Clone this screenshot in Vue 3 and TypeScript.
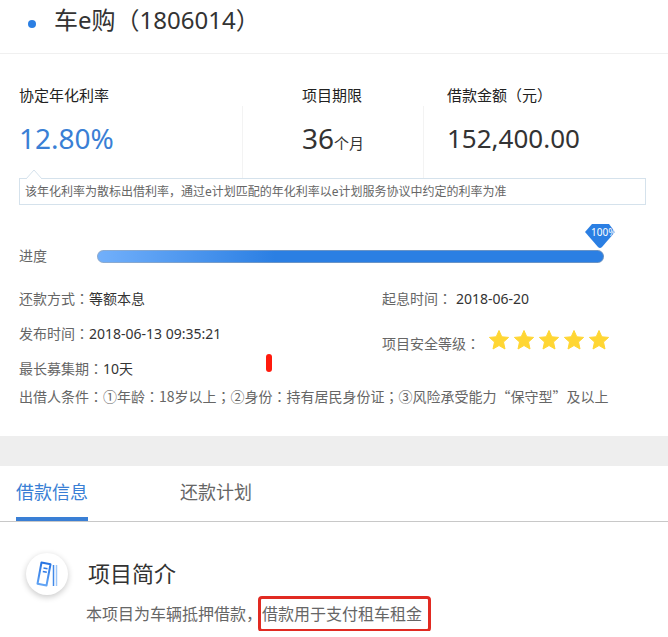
<script setup lang="ts">
import { ref } from 'vue'

interface Tab {
  id: string
  label: string
}

const progress = 100
const stars = 5
const tabs: Tab[] = [
  { id: 'info', label: '借款信息' },
  { id: 'plan', label: '还款计划' },
]
const active = ref('info')
</script>

<template>
  <main class="page">
    <header class="title-bar">
      <span class="dot"></span>
      <h1>车e购<span class="punct" lang="zh-TW">（</span>1806014<span class="punct" lang="zh-TW">）</span></h1>
    </header>

    <section class="summary">
      <dl class="stats">
        <div class="stat">
          <dt>协定年化利率</dt>
          <dd class="rate">12.80%</dd>
        </div>
        <div class="stat stat-term">
          <dt>项目期限</dt>
          <dd class="term">36<small>个月</small></dd>
        </div>
        <div class="stat stat-amount">
          <dt>借款金额<span class="punct" lang="zh-TW">（</span>元<span class="punct" lang="zh-TW">）</span></dt>
          <dd>152,400.00</dd>
        </div>
      </dl>

      <p class="note">
        <svg class="caret" width="18" height="10" viewBox="0 0 18 10" aria-hidden="true">
          <path d="M1 10 9 1l8 9" fill="#fff" stroke="#d5e2ec" />
        </svg>
        该年化利率为散标出借利率，通过e计划匹配的年化利率以e计划服务协议中约定的利率为准
      </p>

      <div class="progress-row">
        <span class="progress-label">进度</span>
        <div class="track" role="progressbar" aria-label="进度" :aria-valuenow="progress">
          <div class="fill" :style="{ width: progress + '%' }"></div>
          <div class="badge">
            <svg width="30" height="25" viewBox="0 0 30 25" aria-hidden="true">
              <path d="M7 0h17l6 8-13 15q-2 2-4 0L0 8z" fill="#2b7fe3" />
            </svg>
            <span class="badge-text">{{ progress }}%</span>
          </div>
        </div>
      </div>

      <div class="details">
        <div class="col-left">
          <p>还款方式<span class="punct" lang="zh-TW">：</span><b>等额本息</b></p>
          <p>发布时间<span class="punct" lang="zh-TW">：</span><b>2018-06-13 09:35:21</b></p>
          <p>最长募集期<span class="punct" lang="zh-TW">：</span><b>10天</b></p>
        </div>
        <div class="col-right">
          <p>起息时间<span class="punct" lang="zh-TW">：</span><b class="date">2018-06-20</b></p>
          <p class="level">
            <span>项目安全等级<span class="punct" lang="zh-TW">：</span></span>
            <span class="stars">
              <svg v-for="n in stars" :key="n" width="22" height="22" viewBox="0 0 22 22" aria-hidden="true">
                <path
                  d="M11 1.5 13.8 7.8 20.6 8.4 15.5 13 17 20 11 16.5 5 20 6.5 13 1.4 8.4 8.2 7.8z"
                  fill="#ffd633" stroke="#ffd633" stroke-linejoin="round"
                />
              </svg>
            </span>
          </p>
        </div>
        <span class="mark"></span>
      </div>
      <p class="conditions">出借人条件<span class="punct" lang="zh-TW">：</span>①年龄<span class="punct" lang="zh-TW">：</span>18岁以上<span class="punct" lang="zh-TW">；</span>②身份<span class="punct" lang="zh-TW">：</span>持有居民身份证<span class="punct" lang="zh-TW">；</span>③风险承受能力“保守型”及以上</p>
    </section>

    <nav class="tabs">
      <button
        v-for="tab in tabs"
        :key="tab.id"
        type="button"
        :class="{ active: active === tab.id }"
        @click="active = tab.id"
      >{{ tab.label }}</button>
    </nav>

    <section class="intro">
      <span class="intro-icon">
        <svg width="42" height="42" viewBox="0 0 42 42" fill="none" aria-hidden="true">
          <defs>
            <linearGradient id="book" x1="0" y1="0" x2="0" y2="1">
              <stop offset="0" stop-color="#2673e2" />
              <stop offset="1" stop-color="#63a5f5" />
            </linearGradient>
          </defs>
          <path d="M15.5 9.5 24.5 11.2 20.5 32.5 11.5 30.8z" stroke="url(#book)" stroke-width="2" stroke-linejoin="round" />
          <path d="m17.5 15 4 .8M16.8 18.5l4 .8" stroke="#2f7be6" stroke-width="1.5" />
          <path d="M27.5 12v21" stroke="#4189e8" stroke-width="1.5" />
          <path d="M30.5 12v21" stroke="#9cc6f8" stroke-width="1.5" />
        </svg>
      </span>
      <div class="intro-body">
        <h2>项目简介</h2>
        <p>本项目为车辆抵押借款，<mark>借款用于支付租车租金</mark></p>
      </div>
    </section>
  </main>
</template>

<style>
body {
  margin: 0;
  background: #fff;
}
</style>

<style scoped>
.page {
  font-family: "Noto Sans", "Noto Sans CJK SC", sans-serif;
  font-size: 14px;
  color: #666;
  overflow: hidden;
}
h1, h2, p, dl, dd {
  margin: 0;
  font-weight: 400;
}
b {
  font-weight: 400;
  color: #333;
}
/* Punctuation centred in its em box */
.punct {
  font-family: "Noto Sans CJK TC", sans-serif;
  line-height: 1;
}
.title-bar {
  display: flex;
  align-items: center;
  gap: 18px;
  padding: 0 28px 13px;
  border-bottom: 1px solid #f0f0f0;
}
.dot {
  width: 8px;
  height: 8px;
  margin-top: 8px;
  border-radius: 50%;
  background: #2b7fe3;
}
h1 {
  font-size: 24px;
  line-height: 40px;
  color: #333;
}
.summary {
  padding: 29px 22px 30px 19px;
}
.stats {
  display: grid;
  grid-template-columns: 223fr 181fr 223fr;
}
.stat {
  position: relative;
  height: 95px;
}
.stat + .stat::before {
  content: "";
  position: absolute;
  left: 0;
  top: 23px;
  bottom: 0;
  border-left: 1px solid #f3f3f3;
}
.stat-term {
  padding-left: 60px;
}
.stat-amount {
  padding-left: 24px;
}
dt {
  font-size: 15px;
  line-height: 24px;
  color: #222;
}
dd {
  margin-top: 11px;
  font-size: 26px;
  line-height: 40px;
  color: #333;
}
.rate {
  font-size: 28px;
  color: #3a7fd5;
}
.term {
  font-size: 28px;
}
small {
  font-size: 15px;
}
.note {
  position: relative;
  padding: 0 5px;
  border: 1px solid #d5e2ec;
  font-size: 12px;
  line-height: 25px;
}
.caret {
  position: absolute;
  left: 5px;
  top: -10px;
}
.progress-row {
  display: flex;
  align-items: center;
  padding: 39px 42px 0 0;
}
.progress-label {
  width: 78px;
  line-height: 24px;
}
.track {
  position: relative;
  flex: 1;
  height: 13px;
  border-radius: 7px;
  background: #e6e6e6;
}
.fill {
  box-sizing: border-box;
  height: 100%;
  border-radius: 7px;
  border: 1px solid rgba(170, 170, 170, 0.5);
  background: linear-gradient(90deg, #72b0fb, #2b7fe3 35%) border-box;
}
.badge {
  position: absolute;
  right: -11px;
  bottom: 14px;
  height: 25px;
}
.badge svg {
  display: block;
}
.badge-text {
  position: absolute;
  left: 6px;
  top: 0;
  font-size: 10px;
  line-height: 17px;
  color: #fff;
}
.details {
  position: relative;
  display: grid;
  grid-template-columns: 363fr 264fr;
  padding-top: 13px;
}
.details p {
  height: 35px;
  line-height: 35px;
}
.date {
  margin-left: 4px;
}
.level {
  display: flex;
  align-items: center;
  gap: 8px;
  padding-top: 10px;
}
.stars {
  display: flex;
  gap: 3px;
  padding-bottom: 8px;
}
.stars svg {
  display: block;
}
.mark {
  position: absolute;
  left: 247px;
  top: 86px;
  width: 6px;
  height: 18px;
  border-radius: 3px;
  background: #ff1a0d;
}
.conditions {
  font-family: "Noto Sans CJK SC", sans-serif;
  line-height: 20px;
}
.tabs {
  display: flex;
  gap: 92px;
  padding: 0 16px;
  border-top: 30px solid #eee;
  border-bottom: 1px solid #c8c8c8;
}
.tabs button {
  padding: 2px 0 0;
  border: 0;
  border-bottom: 4px solid transparent;
  background: none;
  font-family: inherit;
  font-size: 18px;
  line-height: 49px;
  color: #666;
  cursor: pointer;
}
.tabs button.active {
  border-color: #3a7fd5;
  color: #3a7fd5;
}
.intro {
  display: flex;
  gap: 18px;
  padding: 31px 26px 0;
}
.intro-icon {
  width: 42px;
  height: 42px;
  border-radius: 50%;
  box-shadow: 0 2px 6px rgba(0, 0, 0, 0.22);
}
.intro-body h2 {
  padding-left: 2px;
  font-size: 22px;
  line-height: 40px;
  color: #333;
}
.intro-body p {
  padding-top: 4px;
  font-size: 16px;
  line-height: 34px;
}
mark {
  margin-left: -4px;
  padding: 4px 6px 4px 1px;
  border: 3px solid #e12a22;
  border-radius: 4px;
  background: none;
  color: inherit;
}
</style>
